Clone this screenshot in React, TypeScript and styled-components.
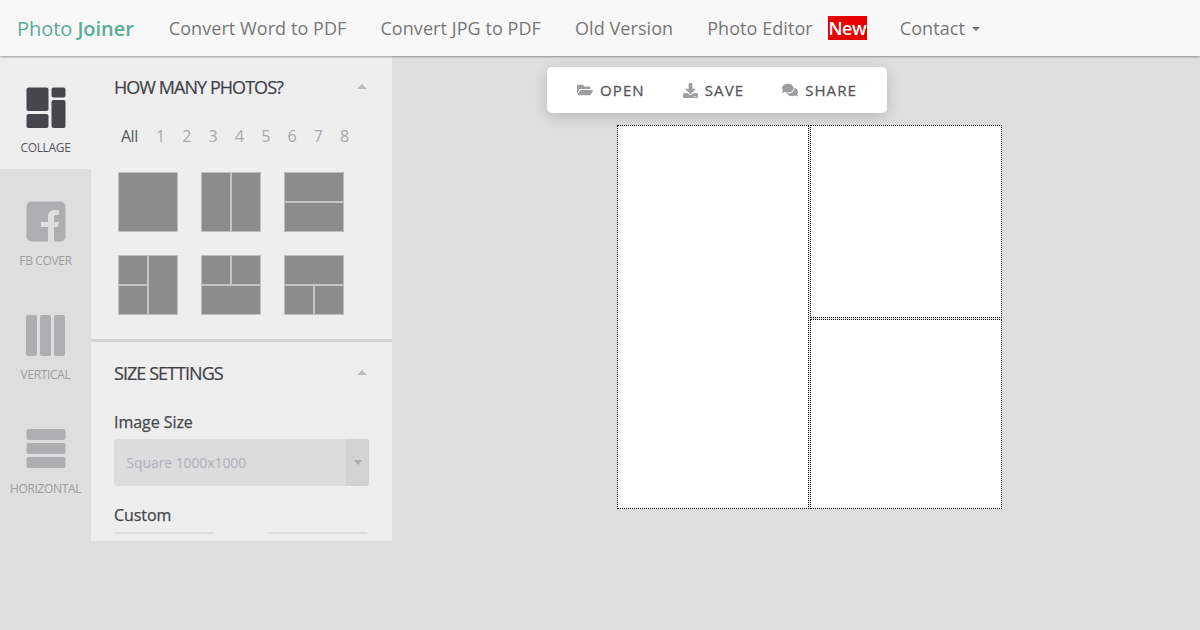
import React from 'react'
import styled, { createGlobalStyle } from 'styled-components'
import { FaFolderOpen, FaDownload, FaComments } from 'react-icons/fa'

const GlobalStyle = createGlobalStyle`
  html, body {
    margin: 0;
    padding: 0;
    height: 100%;
    background: #dedede;
    font-family: 'Open Sans', 'Liberation Sans', sans-serif;
    overflow: hidden;
  }
  * {
    box-sizing: border-box;
  }
`

const Page = styled.div`
  width: 1200px;
  height: 630px;
  display: flex;
  flex-direction: column;
`

const NavBar = styled.header`
  height: 56px;
  flex: none;
  display: flex;
  align-items: center;
  padding-left: 17px;
  background: #f8f8f8;
  box-shadow: 0 1px 2px rgba(0, 0, 0, 0.35);
  position: relative;
  z-index: 2;
`

const Brand = styled.div`
  font-size: 20px;
  color: #5cab97;
  margin-right: 35px;
  letter-spacing: -0.05px;
  b {
    font-weight: 600;
  }
`

const NavLink = styled.span<{ gap?: number }>`
  font-size: 18px;
  letter-spacing: 0.07px;
  color: #777;
  margin-right: ${({ gap }) => gap ?? 34}px;
  display: flex;
  align-items: center;
`

const NewBadge = styled.span`
  background: #e60000;
  color: #fff;
  font-size: 18px;
  font-weight: 600;
  letter-spacing: -0.6px;
  width: 39px;
  height: 24px;
  line-height: 24px;
  text-align: center;
  margin-right: 33px;
  white-space: nowrap;
`

const Caret = styled.i`
  width: 0;
  height: 0;
  margin-left: 7px;
  margin-top: 2px;
  border-left: 4px solid transparent;
  border-right: 4px solid transparent;
  border-top: 4px solid #777;
`

const Body = styled.div`
  flex: 1;
  display: flex;
  align-items: flex-start;
`

const Tabs = styled.nav`
  width: 91px;
  flex: none;
  display: flex;
  flex-direction: column;
`

const Tab = styled.div<{ active?: boolean }>`
  height: ${({ active }) => (active ? 113 : 114)}px;
  display: flex;
  flex-direction: column;
  align-items: center;
  padding-top: ${({ active }) => (active ? 31 : 32)}px;
  background: ${({ active }) => (active ? '#eeeeee' : 'transparent')};
  color: ${({ active }) => (active ? '#55575c' : '#9c9d9f')};
  svg {
    display: block;
    color: ${({ active }) => (active ? '#45474d' : '#adaeb0')};
  }
`

const TabLabel = styled.span`
  font-size: 12px;
  line-height: 16px;
  margin-top: 11px;
  letter-spacing: -0.35px;
  white-space: nowrap;
`

const Panel = styled.aside`
  width: 301px;
  height: 485px;
  flex: none;
  background: #eeeeee;
`

const PanelScroll = styled.div`
  height: 478px;
  overflow: hidden;
`

const Section = styled.section<{ divided?: boolean }>`
  padding: 0 23px;
  height: ${({ divided }) => (divided ? 'auto' : '286px')};
  border-bottom: ${({ divided }) => (divided ? 'none' : '3px solid #d4d4d4')};
`

const SectionHead = styled.div`
  height: 61px;
  display: flex;
  align-items: center;
  justify-content: space-between;
`

const SectionTitle = styled.h2`
  margin: 0;
  font-size: 18px;
  font-weight: 400;
  letter-spacing: -0.95px;
  color: #3f4146;
  -webkit-text-stroke: 0.2px #3f4146;
`

const CollapseArrow = styled.i`
  width: 0;
  height: 0;
  margin-right: 2px;
  border-left: 5px solid transparent;
  border-right: 5px solid transparent;
  border-bottom: 5px solid #b9bbbf;
`

const CountRow = styled.div`
  display: flex;
  padding-left: 7px;
  height: 24px;
  align-items: center;
  margin: 7px 0 24px;
`

const Count = styled.span<{ active?: boolean }>`
  font-size: 16px;
  width: 26.3px;
  color: ${({ active }) => (active ? '#55575c' : '#a6a8ad')};
  &:first-child {
    width: 35px;
    letter-spacing: -0.5px;
  }
`

const LayoutGrid = styled.div`
  display: grid;
  grid-template-columns: repeat(3, 60px);
  grid-auto-rows: 60px;
  column-gap: 23px;
  row-gap: 23px;
  padding-left: 4px;
`

const LayoutThumb = styled.div<{ cols: string; rows: string }>`
  display: grid;
  grid-template-columns: ${({ cols }) => cols};
  grid-template-rows: ${({ rows }) => rows};
  gap: 2px;
  background: #c4c4c4;
  border: 1px solid #bdbdbd;
`

const ThumbCell = styled.div<{ area?: string }>`
  background: #8c8c8c;
  grid-area: ${({ area }) => area ?? 'auto'};
`

const FieldLabel = styled.div`
  font-size: 16px;
  line-height: 22px;
  color: #45474d;
  letter-spacing: -0.05px;
  -webkit-text-stroke: 0.25px #45474d;
`

const FirstFieldLabel = styled(FieldLabel)`
  margin-top: 8px;
`

const Select = styled.div`
  height: 47px;
  margin: 6px 0 18px -0.5px;
  border-radius: 3px;
  background: #dcdcdc;
  display: flex;
  align-items: center;
  justify-content: space-between;
  padding-left: 13px;
  font-size: 14px;
  letter-spacing: -0.1px;
  color: #adafb8;
`

const SelectArrow = styled.span`
  width: 23px;
  height: 100%;
  background: #d2d2d2;
  border-radius: 0 3px 3px 0;
  display: flex;
  align-items: center;
  justify-content: center;
  &::after {
    content: '';
    border-left: 4px solid transparent;
    border-right: 4px solid transparent;
    border-top: 5px solid #a9abaf;
  }
`

const CustomRow = styled.div`
  display: flex;
  justify-content: space-between;
  margin-top: 6px;
  padding-right: 1px;
`

const CustomInput = styled.div`
  width: 101px;
  height: 30px;
  border-radius: 3px;
  border-top: 2px solid #dcdcdc;
  background: #eeeeee;
`

const Main = styled.main`
  flex: 1;
  display: flex;
  flex-direction: column;
  align-items: flex-start;
  padding: 11px 0 0 155px;
`

const Toolbar = styled.div`
  width: 340px;
  height: 46px;
  display: flex;
  align-items: center;
  padding-left: 30px;
  background: #fff;
  border-radius: 5px;
  box-shadow: 0 4px 14px rgba(0, 0, 0, 0.16);
`

const ToolButton = styled.span<{ gap: number }>`
  display: flex;
  align-items: center;
  font-size: 15px;
  letter-spacing: 1.1px;
  color: #55575c;
  -webkit-text-stroke: 0.3px #55575c;
  margin-right: ${({ gap }) => gap}px;
  svg {
    color: #9c9ea2;
    margin-right: 7px;
  }
`

const Canvas = styled.div`
  width: 385px;
  height: 384px;
  margin: 12px 0 0 70px;
  display: grid;
  grid-template-columns: 192px 192px;
  grid-template-rows: 193px 190px;
  gap: 1px;
`

const CanvasCell = styled.div<{ tall?: boolean }>`
  border: 1px dotted #000;
  background: #fff;
  grid-row: ${({ tall }) => (tall ? '1 / span 2' : 'auto')};
`

const CollageIcon = () => (
  <svg width="40" height="42" viewBox="0 0 40 42" fill="currentColor">
    <rect x="0.5" y="0.5" width="22" height="23.5" rx="2" />
    <rect x="0.5" y="27" width="22" height="14" rx="2" />
    <rect x="25.5" y="0.5" width="14" height="10" rx="2" />
    <rect x="25.5" y="13" width="14" height="28" rx="2" />
  </svg>
)

const FacebookIcon = () => (
  <svg width="40" height="41" viewBox="0 0 40 41">
    <rect x="0.5" y="0.5" width="39" height="40" rx="5" fill="currentColor" />
    <path
      d="M22 41V26h-7v-5h7v-5c0-5 3-7 7-7h4v5h-3c-2 0-2 1-2 2v5h5l-1 5h-4v15z"
      fill="#dedede"
    />
  </svg>
)

const VerticalIcon = () => (
  <svg width="39" height="41" viewBox="0 0 39 41" fill="currentColor">
    <rect x="0" y="0" width="11" height="41" rx="2" />
    <rect x="14" y="0" width="11" height="41" rx="2" />
    <rect x="28" y="0" width="11" height="41" rx="2" />
  </svg>
)

const HorizontalIcon = () => (
  <svg width="40" height="41" viewBox="0 0 40 41" fill="currentColor">
    <rect x="0.5" y="0" width="39" height="11" rx="2" />
    <rect x="0.5" y="14" width="39" height="11" rx="2" />
    <rect x="0.5" y="28" width="39" height="11" rx="2" />
  </svg>
)

const counts = ['All', '1', '2', '3', '4', '5', '6', '7', '8']

const layouts = [
  { cols: '1fr', rows: '1fr', cells: [undefined] },
  { cols: '1fr 1fr', rows: '1fr', cells: [undefined, undefined] },
  { cols: '1fr', rows: '1fr 1fr', cells: [undefined, undefined] },
  { cols: '1fr 1fr', rows: '1fr 1fr', cells: [undefined, '1 / 2 / 3 / 3', undefined] },
  { cols: '1fr 1fr', rows: '1fr 1fr', cells: [undefined, undefined, '2 / 1 / 3 / 3'] },
  { cols: '1fr 1fr', rows: '1fr 1fr', cells: ['1 / 1 / 2 / 3', undefined, undefined] },
]

export default function App() {
  return (
    <Page>
      <GlobalStyle />
      <NavBar>
        <Brand>
          Photo <b>Joiner</b>
        </Brand>
        <NavLink>Convert Word to PDF</NavLink>
        <NavLink>Convert JPG to PDF</NavLink>
        <NavLink>Old Version</NavLink>
        <NavLink gap={15}>Photo Editor</NavLink>
        <NewBadge>New</NewBadge>
        <NavLink>
          Contact <Caret />
        </NavLink>
      </NavBar>
      <Body>
        <Tabs>
          <Tab active>
            <CollageIcon />
            <TabLabel>COLLAGE</TabLabel>
          </Tab>
          <Tab>
            <FacebookIcon />
            <TabLabel>FB COVER</TabLabel>
          </Tab>
          <Tab>
            <VerticalIcon />
            <TabLabel>VERTICAL</TabLabel>
          </Tab>
          <Tab>
            <HorizontalIcon />
            <TabLabel>HORIZONTAL</TabLabel>
          </Tab>
        </Tabs>
        <Panel>
          <PanelScroll>
            <Section>
              <SectionHead>
                <SectionTitle>HOW MANY PHOTOS?</SectionTitle>
                <CollapseArrow />
              </SectionHead>
              <CountRow>
                {counts.map((c) => (
                  <Count key={c} active={c === 'All'}>
                    {c}
                  </Count>
                ))}
              </CountRow>
              <LayoutGrid>
                {layouts.map((l, i) => (
                  <LayoutThumb key={i} cols={l.cols} rows={l.rows}>
                    {l.cells.map((area, j) => (
                      <ThumbCell key={j} area={area} />
                    ))}
                  </LayoutThumb>
                ))}
              </LayoutGrid>
            </Section>
            <Section divided>
              <SectionHead>
                <SectionTitle>SIZE SETTINGS</SectionTitle>
                <CollapseArrow />
              </SectionHead>
              <FirstFieldLabel>Image Size</FirstFieldLabel>
              <Select>
                Square 1000x1000
                <SelectArrow />
              </Select>
              <FieldLabel>Custom</FieldLabel>
              <CustomRow>
                <CustomInput />
                <CustomInput />
              </CustomRow>
            </Section>
          </PanelScroll>
        </Panel>
        <Main>
          <Toolbar>
            <ToolButton gap={38}>
              <FaFolderOpen size={16} />
              OPEN
            </ToolButton>
            <ToolButton gap={38}>
              <FaDownload size={15} />
              SAVE
            </ToolButton>
            <ToolButton gap={0}>
              <FaComments size={16} />
              SHARE
            </ToolButton>
          </Toolbar>
          <Canvas>
            <CanvasCell tall />
            <CanvasCell />
            <CanvasCell />
          </Canvas>
        </Main>
      </Body>
    </Page>
  )
}
